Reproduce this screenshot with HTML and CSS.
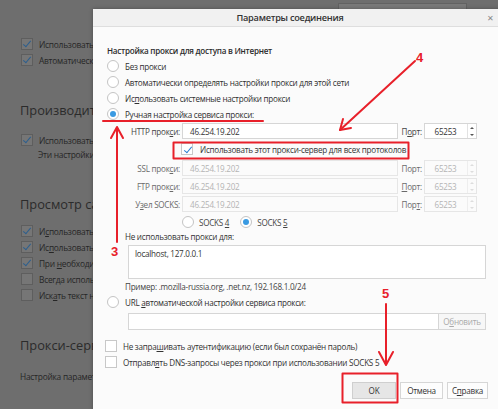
FILE: index.html
```html
<!DOCTYPE html>
<html lang="ru">
<head>
    <meta charset="UTF-8">
    <title>Параметры соединения</title>
    <link rel="stylesheet" href="styles.css">
</head>
<body>

    <div class="prefs">
        <div class="prefs-top"><span class="search"></span></div>

        <div class="pref-check first"><span class="box on"></span><span>Использовать автопрокрутку</span></div>
        <div class="pref-check"><span class="box on"></span><span>Автоматически проверять орфографию</span></div>

        <div class="pref-title">Производительность</div>
        <div class="pref-check gap"><span class="box on"></span><span>Использовать рекомендуемые настройки</span></div>
        <div class="pref-note">Эти настройки подобраны для вашего компьютера</div>

        <div class="pref-title">Просмотр сайтов</div>
        <div class="pref-check gap2"><span class="box on"></span><span>И<u>с</u>пользовать автопрокрутку</span></div>
        <div class="pref-check"><span class="box on"></span><span>Ис<u>п</u>ользовать плавную прокрутку</span></div>
        <div class="pref-check"><span class="box on"></span><span>При <u>н</u>еобходимости показывать клавиатуру</span></div>
        <div class="pref-check"><span class="box"></span><span>Всегда использовать клавиши курсора</span></div>
        <div class="pref-check"><span class="box"></span><span>Иск<u>а</u>ть текст на странице</span></div>

        <div class="pref-title">Прокси-сервер</div>
        <div class="pref-note plain">Настройка параметров соединения</div>
    </div>

    <div class="dialog">
        <div class="titlebar">
            <span class="title">Параметры соединения</span>
            <span class="close">✕</span>
        </div>

        <div class="dlg-body">
            <div class="heading">Настройка прокси для доступа в Интернет</div>
            <div class="radio-row"><span class="radio"></span><span>Без прокси</span></div>
            <div class="radio-row"><span class="radio"></span><span>Автоматически определять настройки прокси для этой сети</span></div>
            <div class="radio-row"><span class="radio"></span><span>Ис<u>п</u>ользовать системные настройки прокси</span></div>
            <div class="radio-row"><span class="radio on"></span><span>Ручная настройка сервиса прокси:</span></div>

            <div class="proxy">
                <div class="proxy-row">
                    <label>HTTP прок<u>с</u>и:</label>
                    <span class="field">46.254.19.202</span>
                    <label class="port-label">П<u>о</u>рт:</label>
                    <span class="field port">65253<span class="spin"><i class="up"></i><i class="down"></i></span></span>
                </div>
                <div class="all-row"><span class="check on"></span><span>Использовать этот прокси-сервер для всех протоколов</span></div>
                <div class="proxy-row off">
                    <label>SSL прок<u>с</u>и:</label>
                    <span class="field">46.254.19.202</span>
                    <label class="port-label">Порт:</label>
                    <span class="field port">65253<span class="spin"><i class="up"></i><i class="down"></i></span></span>
                </div>
                <div class="proxy-row off">
                    <label>FTP прок<u>с</u>и:</label>
                    <span class="field">46.254.19.202</span>
                    <label class="port-label"><u>П</u>орт:</label>
                    <span class="field port">65253<span class="spin"><i class="up"></i><i class="down"></i></span></span>
                </div>
                <div class="proxy-row off">
                    <label>У<u>з</u>ел SOCKS:</label>
                    <span class="field">46.254.19.202</span>
                    <label class="port-label">Пор<u>т</u>:</label>
                    <span class="field port">65253<span class="spin"><i class="up"></i><i class="down"></i></span></span>
                </div>
                <div class="socks-row">
                    <span class="socks"><span class="radio"></span><span>SOCKS <u>4</u></span></span>
                    <span class="socks"><span class="radio on"></span><span>SOCKS <u>5</u></span></span>
                </div>
            </div>

            <div class="label-line">Не использовать прокси для:</div>
            <div class="textarea">localhost, 127.0.0.1</div>
            <div class="label-line hint">Пример: .mozilla-russia.org, .net.nz, 192.168.1.0/24</div>

            <div class="radio-row"><span class="radio"></span><span>URL <u>а</u>втоматической настройки сервиса прокси:</span></div>
            <div class="url-row">
                <span class="field url"></span>
                <span class="btn reload"><span>О<u>б</u>новить</span></span>
            </div>

            <div class="check-row first"><span class="check"></span><span>Не запра<u>ш</u>ивать аутентификацию (если был сохранён пароль)</span></div>
            <div class="check-row"><span class="check"></span><span>Отправл<u>я</u>ть DNS-запросы через прокси при использовании SOCKS 5</span></div>

            <div class="buttons">
                <span class="btn ok">OK</span>
                <span class="btn cancel">Отмена</span>
                <span class="btn help"><span>С<u>п</u>равка</span></span>
            </div>
        </div>
    </div>

    <svg class="marks" width="498" height="409" viewBox="0 0 498 409">
        <g stroke="#e8202a" stroke-width="2" fill="none" stroke-linecap="round" stroke-linejoin="round">
            <line x1="103" y1="121" x2="263" y2="121"/>
            <line x1="117" y1="242" x2="117" y2="128"/>
            <polyline points="111,138 117,127 123,138"/>
            <rect x="173.5" y="142.5" width="235" height="16"/>
            <line x1="415" y1="61" x2="340" y2="130"/>
            <polyline points="343,119 340,130 351,128"/>
            <line x1="386" y1="304" x2="386" y2="364"/>
            <polyline points="379,352 386,365 393,352"/>
            <rect x="342.5" y="373.5" width="55" height="29"/>
        </g>
        <g fill="#e8202a" font-family="Liberation Sans, Arial, sans-serif" font-weight="bold" font-size="13">
            <text x="416" y="62">4</text>
            <text x="111" y="256">3</text>
            <text x="382" y="298">5</text>
        </g>
    </svg>

</body>
</html>
```

FILE: styles.css
```css
* {
    box-sizing: border-box;
}

html, body {
    margin: 0;
    padding: 0;
}

body {
    width: 498px;
    height: 409px;
    overflow: hidden;
    position: relative;
    background-color: #6e6e6e;
    font-family: "Open Sans", "Noto Sans", sans-serif;
    font-size: 8.1px;
    letter-spacing: -0.25px;
    color: #2f2f2f;
}

u {
    text-decoration-thickness: 1px;
    text-underline-offset: 1px;
}

/* background preferences page (greyed out) */

.prefs {
    padding-left: 20px;
    color: #262626;
}

.prefs-top {
    height: 9px;
    padding-top: 3px;
}

.search {
    display: block;
    margin-left: 318px;
    width: 129px;
    height: 6px;
    background-color: #7a7a7a;
    border: 1px solid #626262;
    border-bottom: 0;
}

.pref-check {
    display: flex;
    align-items: center;
    gap: 6px;
    height: 16px;
    font-size: 8.4px;
    white-space: nowrap;
}

.pref-check.first {
    margin-top: 27px;
}

.pref-check.gap {
    margin-top: 10px;
}

.pref-check.gap2 {
    margin-top: 7px;
}

.box {
    flex: none;
    width: 12px;
    height: 12px;
    margin-left: 1px;
    border: 1px solid #5e5e5e;
    background-color: #767676;
    position: relative;
}

.box.on::after {
    content: "";
    position: absolute;
    left: 3px;
    top: 0px;
    width: 3px;
    height: 7px;
    border-right: 1.5px solid #2c5f8f;
    border-bottom: 1.5px solid #2c5f8f;
    transform: rotate(40deg);
}

.pref-note {
    height: 14px;
    line-height: 14px;
    margin-left: 18px;
    font-size: 8.4px;
    white-space: nowrap;
}

.pref-note.plain {
    margin-left: 0;
    margin-top: 13px;
}

.pref-title {
    height: 24px;
    line-height: 24px;
    font-size: 12.8px;
    letter-spacing: 0;
    color: #2b2b2b;
    white-space: nowrap;
    margin-top: 30px;
}

/* dialog */

.dialog {
    position: absolute;
    left: 93px;
    top: 9px;
    width: 412px;
    height: 410px;
    background-color: #fbfbfb;
    box-shadow: 0 0 4px rgba(0, 0, 0, 0.3);
}

.titlebar {
    display: flex;
    align-items: center;
    height: 18px;
    background-color: #f1f1f1;
    border-bottom: 1px solid #dedede;
}

.title {
    flex: 1;
    text-align: center;
    font-size: 9.2px;
    font-weight: 600;
    color: #333;
}

.close {
    width: 18px;
    text-align: left;
    font-size: 8px;
    color: #888;
}

.dlg-body {
    padding: 17px 19px 0 14px;
}

.heading {
    height: 14px;
    line-height: 14px;
    font-weight: 600;
    color: #2b2b2b;
}

.radio-row {
    display: flex;
    align-items: center;
    gap: 6px;
    height: 16px;
    white-space: nowrap;
}

.radio {
    flex: none;
    width: 12px;
    height: 12px;
    border-radius: 50%;
    border: 1px solid #c4c4c4;
    background-color: #fff;
    position: relative;
}

.radio.on::after {
    content: "";
    position: absolute;
    left: 2px;
    top: 2px;
    width: 6px;
    height: 6px;
    border-radius: 50%;
    background-color: #3a9ae2;
}

.proxy {
    margin-left: 18px;
    margin-top: 1px;
}

.proxy-row {
    display: flex;
    align-items: center;
    height: 16px;
    margin-bottom: 2px;
}

.proxy-row label {
    width: 57px;
    padding-right: 2px;
    text-align: right;
    white-space: nowrap;
    color: #444;
}

.field {
    display: flex;
    align-items: center;
    height: 16px;
    width: 216px;
    padding-left: 7px;
    background-color: #fff;
    border: 1px solid #d6d6d6;
    color: #333;
}

.proxy-row .port-label {
    width: 26px;
    padding-right: 2px;
}

.field.port {
    width: 53px;
    padding-left: 0;
    justify-content: center;
    position: relative;
    padding-right: 10px;
}

.spin {
    position: absolute;
    right: 0;
    top: 0;
    bottom: 0;
    width: 9px;
    border-left: 1px solid #e2e2e2;
    display: flex;
    flex-direction: column;
    justify-content: space-around;
    align-items: center;
}

.spin i {
    width: 0;
    height: 0;
    border-left: 2px solid transparent;
    border-right: 2px solid transparent;
}

.spin .up {
    border-bottom: 2px solid #555;
}

.spin .down {
    border-top: 2px solid #555;
}

.proxy-row.off label {
    color: #6a6a6a;
}

.proxy-row.off .field {
    border-color: #e6e6e6;
    background-color: #fbfbfb;
    color: #b4b4b4;
}

.proxy-row.off .spin {
    border-left-color: #eee;
}

.proxy-row.off .spin .up {
    border-bottom-color: #ddd;
}

.proxy-row.off .spin .down {
    border-top-color: #ddd;
}

.all-row {
    display: flex;
    align-items: center;
    gap: 7px;
    height: 16px;
    margin-bottom: 3px;
    margin-left: 56px;
    white-space: nowrap;
    color: #333;
}

.check {
    flex: none;
    width: 12px;
    height: 12px;
    border: 1px solid #c8c8c8;
    background-color: #fff;
    position: relative;
}

.check.on::after {
    content: "";
    position: absolute;
    left: 3.5px;
    top: 0.5px;
    width: 3px;
    height: 7px;
    border-right: 1.5px solid #2a7fd0;
    border-bottom: 1.5px solid #2a7fd0;
    transform: rotate(40deg);
}

.socks-row {
    display: flex;
    align-items: center;
    height: 16px;
    margin-left: 57px;
    gap: 11px;
    color: #444;
}

.socks {
    display: flex;
    align-items: center;
    gap: 5px;
}

.label-line {
    height: 14px;
    line-height: 14px;
    margin-left: 18px;
    white-space: nowrap;
    color: #333;
}

.label-line.hint {
    margin-top: 1px;
    color: #444;
}

.textarea {
    margin: 1px 0 0 21px;
    height: 34px;
    padding: 2px 6px;
    background-color: #fff;
    border: 1px solid #d6d6d6;
    color: #333;
}

.url-row {
    display: flex;
    margin: 3px 0 0 21px;
}

.field.url {
    flex: 1;
    width: auto;
    height: 17px;
}

.btn {
    display: flex;
    align-items: center;
    justify-content: center;
    height: 17px;
    background-color: #fdfdfd;
    border: 1px solid #d6d6d6;
    color: #333;
    white-space: nowrap;
}

.btn.reload {
    width: 47px;
    border-left: 0;
    color: #aaa;
    background-color: #f7f7f7;
}

.check-row {
    display: flex;
    align-items: center;
    gap: 6px;
    height: 16px;
    margin-left: -2px;
    white-space: nowrap;
    color: #333;
}

.check-row.first {
    margin-top: 8px;
}

.buttons {
    display: flex;
    justify-content: flex-end;
    gap: 4px;
    margin: 12px -2px 0 0;
}

.btn.ok {
    width: 44px;
    background-color: #e6e6e6;
    border-color: #cfcfcf;
}

.btn.cancel {
    width: 43px;
}

.btn.help {
    width: 41px;
}

/* red annotations on top of the screenshot */

.marks {
    position: absolute;
    left: 0;
    top: 0;
    pointer-events: none;
}
```
